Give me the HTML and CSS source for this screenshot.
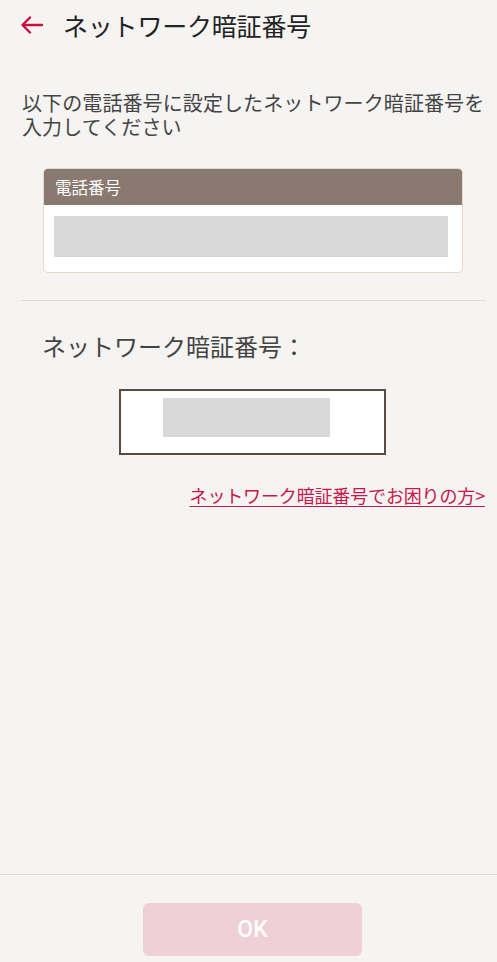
FILE: index.html
```html
<!DOCTYPE html>
<html lang="ja">
<head>
<meta charset="utf-8">
<title>ネットワーク暗証番号</title>
<link rel="stylesheet" href="styles.css">
</head>
<body>
<div class="page">
  <header class="topbar">
    <svg class="back" width="24" height="18" viewBox="0 0 24 18" aria-hidden="true">
      <path d="M22 9H3M10 1.5L2.5 9L10 16.5" fill="none" stroke="#c8103e" stroke-width="2.4" stroke-linecap="round" stroke-linejoin="round"/>
    </svg>
    <h1 class="title">ネットワーク暗証番号</h1>
  </header>
  <main class="content">
    <p class="lead">以下の電話番号に設定したネットワーク暗証番号を入力してください</p>
    <section class="card">
      <div class="card-head">電話番号</div>
      <div class="card-body"><div class="mask mask-wide"></div></div>
    </section>
    <hr class="divider">
    <div class="pin-label">ネットワーク暗証番号：</div>
    <div class="pin-row">
      <div class="pin-box"><div class="mask mask-pin"></div></div>
    </div>
    <div class="help-row"><a class="help" href="#">ネットワーク暗証番号でお困りの方&gt;</a></div>
  </main>
  <footer class="footer">
    <button class="ok" type="button">OK</button>
  </footer>
</div>
</body>
</html>
```
FILE: styles.css
```css
html, body {
  margin: 0;
  padding: 0;
  background: #f5f4f2;
}
body {
  font-family: "Noto Sans CJK JP", "Noto Sans", sans-serif;
  color: #333;
}
.page {
  min-height: 100vh;
  display: flex;
  flex-direction: column;
}
.topbar {
  display: flex;
  align-items: center;
  height: 50px;
  padding-left: 20px;
}
.back {
  display: block;
  flex: none;
}
.title {
  margin: 0 0 0 19px;
  font-size: 25px;
  font-weight: 400;
  line-height: 50px;
  color: #222;
  letter-spacing: -0.2px;
}
.content {
  flex: 1;
  display: flex;
  flex-direction: column;
}
.lead {
  margin: 41px 12px 0 22px;
  font-size: 20px;
  line-height: 24px;
  color: #444;
  letter-spacing: 0.1px;
}
.card {
  margin: 29px 34px 0 43px;
  border: 1px solid #e2d9cc;
  border-radius: 5px;
  background: #fff;
  overflow: hidden;
}
.card-head {
  height: 36px;
  background: #8a7970;
  color: #fff;
  font-size: 16.5px;
  line-height: 36px;
  padding-left: 11px;
}
.card-body {
  padding: 11px 14px 15px 10px;
}
.mask {
  background: #d9d9d9;
}
.mask-wide {
  height: 41px;
}
.divider {
  margin: 27px 12px 0 21px;
  border: 0;
  border-top: 1px solid #dedacb;
  height: 0;
}
.pin-label {
  margin: 33px 0 0 42px;
  font-size: 24px;
  line-height: 24px;
  color: #444;
}
.pin-row {
  margin: 31px 0 0 119px;
  display: flex;
}
.pin-box {
  border: 2px solid #5a4b42;
  background: #fff;
  padding: 7px 0 0 42px;
  width: 221px;
  height: 55px;
}
.mask-pin {
  width: 167px;
  height: 39px;
}
.help-row {
  display: flex;
  justify-content: flex-end;
  margin: 29px 12px 0 0;
}
.help {
  font-size: 18px;
  line-height: 22px;
  color: #c8174a;
  text-decoration: underline;
  text-underline-offset: 3px;
  letter-spacing: -0.15px;
}
.footer {
  border-top: 1px solid #e2dbd0;
  padding: 28px 0 6px;
  display: flex;
  justify-content: center;
}
.ok {
  width: 219px;
  height: 53px;
  margin-left: 8px;
  border: 0;
  border-radius: 6px;
  background: #efd0d6;
  color: #fff;
  font-family: Roboto, "Noto Sans", sans-serif;
  font-size: 23px;
  font-weight: 500;
}
```
